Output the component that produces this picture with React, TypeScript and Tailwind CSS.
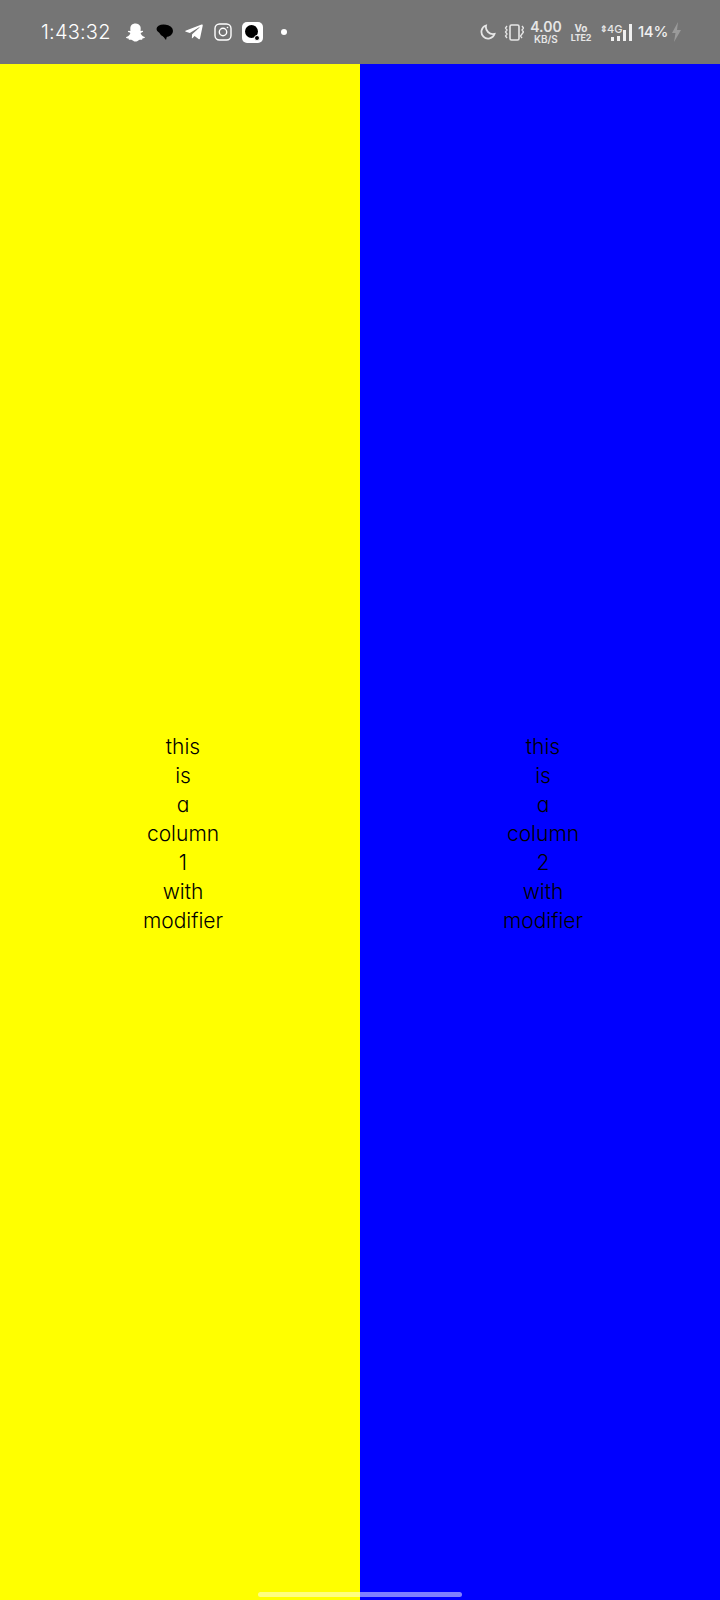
import { FaSnapchatGhost, FaTelegramPlane } from 'react-icons/fa'

const words = ['this', 'is', 'a', 'column', '', 'with', 'modifier']

function Column({ n, bg }: { n: number; bg: string }) {
  return (
    <div className={`flex-1 flex flex-col items-center justify-center pl-[6px] pt-[2px] ${bg}`}>
      {words.map((word, i) => (
        <div key={i} className="text-[21px] leading-[29px] text-black font-light [font-feature-settings:'cv11']">
          {word || n}
        </div>
      ))}
    </div>
  )
}

function ChatIcon() {
  return (
    <svg width="18" height="18" viewBox="0 0 18 18" className="ml-[11px]">
      <ellipse cx="7.500" cy="6" rx="7" ry="4.500" fill="#000" />
      <ellipse cx="10" cy="8" rx="7" ry="6" fill="#000" />
      <path d="M6 12l5 1-1 4z" fill="#000" />
    </svg>
  )
}

function InstagramIcon() {
  return (
    <svg width="18" height="18" viewBox="0 0 18 18" className="ml-[10px]" fill="none" stroke="#fff">
      <rect x="1" y="1" width="16" height="16" rx="4.500" strokeWidth="1.400" />
      <circle cx="9" cy="9" r="3.700" strokeWidth="1.400" />
      <circle cx="13.500" cy="4.500" r="0.800" fill="#fff" stroke="none" />
    </svg>
  )
}

function AppIcon() {
  return (
    <div className="ml-[10px] w-[21px] h-[21px] rounded-[5px] bg-white flex items-center justify-center">
      <svg width="17" height="17" viewBox="0 0 17 17">
        <circle cx="7.500" cy="7.500" r="6.500" fill="#000" />
        <circle cx="13" cy="14" r="2.500" fill="#000" stroke="#fff" strokeWidth="1" />
      </svg>
    </div>
  )
}

function Moon() {
  return (
    <svg width="16" height="16" viewBox="0 0 16 16" fill="none" stroke="#e6e6e6" strokeWidth="1.800">
      <path d="M6 1.500a6.700 6.700 0 1 0 8.500 8.500C9.500 11 5 6.500 6 1.500z" />
    </svg>
  )
}

function Vibrate() {
  return (
    <svg width="20" height="17" viewBox="0 0 20 17" className="ml-[8px]" fill="none" stroke="#e6e6e6">
      <rect x="6" y="1" width="9" height="15" rx="1.500" strokeWidth="1.600" />
      <path d="M3 2l-1.500 2L3 6 1.500 8 3 10l-1.500 2L3 14M18 2l1.500 2L18 6l1.500 2L18 10l-1.500 2 1.500 2" strokeWidth="1.300" />
    </svg>
  )
}

function Signal() {
  return (
    <div className="ml-[8px] relative w-[33px] h-[18px]">
      <div className="absolute left-0 top-0 text-[9px] leading-[12px] font-semibold text-[#e6e6e6]">⇕</div>
      <div className="absolute left-[7px] top-0 text-[11px] leading-[12px] font-medium text-[#e6e6e6]">4G</div>
      <div className="absolute left-[11px] bottom-0 w-[3px] h-[4px] bg-[#f0f0f0]" />
      <div className="absolute left-[17px] bottom-0 w-[3px] h-[5px] bg-[#f0f0f0]" />
      <div className="absolute left-[23px] bottom-0 w-[3px] h-[11px] bg-[#f0f0f0]" />
      <div className="absolute left-[29px] bottom-0 w-[3px] h-[17px] bg-[#f0f0f0]" />
    </div>
  )
}

function StatusBar() {
  return (
    <div className="h-16 bg-[#757575] flex items-center justify-between pl-[41px] pr-[39px] shrink-0">
      <div className="flex items-center">
        <span className="text-[20px] font-light text-white tracking-[0.2px] w-[69px]">1:43:32</span>
        <FaSnapchatGhost className="ml-[16px] text-white" size={19} />
        <ChatIcon />
        <FaTelegramPlane className="ml-[10px] text-white" size={20} />
        <InstagramIcon />
        <AppIcon />
        <div className="ml-[18px] w-[6px] h-[6px] rounded-full bg-white" />
      </div>
      <div className="flex items-center">
        <Moon />
        <Vibrate />
        <div className="ml-[7px] w-[30px] flex flex-col items-center font-semibold text-[#e6e6e6]">
          <span className="text-[14px] leading-[14px]">4.00</span>
          <span className="text-[10px] leading-[10px]">KB/S</span>
        </div>
        <div className="ml-[9px] w-[22px] flex flex-col items-center font-bold text-[#e6e6e6]">
          <span className="text-[10px] leading-[10px]">Vo</span>
          <span className="text-[9px] leading-[9px] tracking-[-0.3px]">LTE2</span>
        </div>
        <Signal />
        <span className="ml-[5px] text-[15px] font-medium tracking-[-0.3px] text-[#f0f0f0]">14%</span>
        <svg width="9" height="20" viewBox="0 0 9 20" className="ml-[4px]">
          <path d="M6 0L0 11h3.500L2 20l7-12H5z" fill="#9a9a9a" />
        </svg>
      </div>
    </div>
  )
}

export default function App() {
  return (
    <div className="relative w-[720px] h-[1600px] flex flex-col font-['Inter',sans-serif]">
      <StatusBar />
      <div className="flex flex-1">
        <Column n={1} bg="bg-[#ffff00]" />
        <Column n={2} bg="bg-[#0000ff]" />
      </div>
      {/* home pill */}
      <div className="absolute left-[258px] top-[1592px] w-[204px] h-[5px] rounded-full bg-white/50" />
    </div>
  )
}
